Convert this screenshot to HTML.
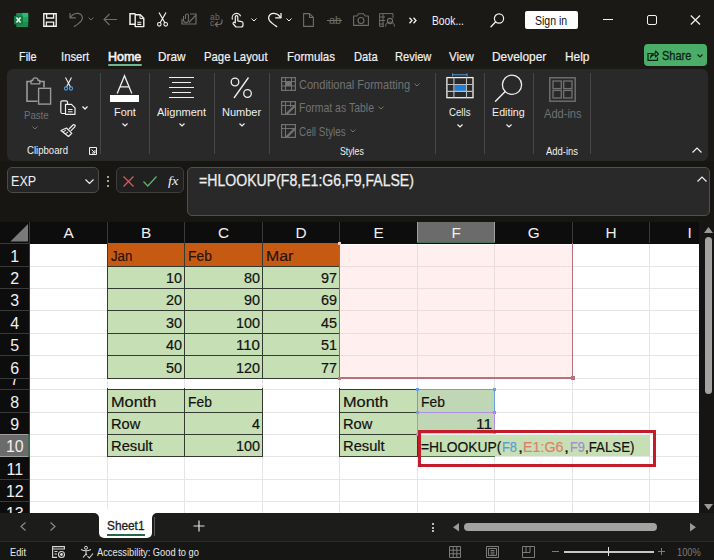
<!DOCTYPE html>
<html><head><meta charset="utf-8">
<style>
*{margin:0;padding:0;box-sizing:border-box}
html,body{width:714px;height:560px;overflow:hidden;background:#1c1a17;font-family:"Liberation Sans",sans-serif;color:#fff;position:relative}
.a{position:absolute}
.t{position:absolute;white-space:nowrap;line-height:1;transform-origin:0 0}
svg{position:absolute;overflow:visible}
</style></head><body>
<div class="a" style="left:0px;top:0px;width:714px;height:222px;background:#1a1916;"></div>
<div class="a" style="left:0px;top:161px;width:714px;height:61px;background:#181613;"></div>
<svg style="left:14px;top:12px;" width="15" height="15" viewBox="0 0 15 15"><rect x="2.2" y="0.9" width="12" height="14" rx="1" fill="#1a8f50"/><rect x="8.3" y="0.9" width="5.9" height="4.6" fill="#2fb876"/><rect x="8.3" y="5.5" width="5.9" height="4.6" fill="#21a05e"/><rect x="0" y="3.7" width="9" height="8.8" rx="1" fill="#127a42"/><path d="M2.4 5.6 L6.6 10.6 M6.6 5.6 L2.4 10.6" stroke="#e8f5ec" stroke-width="1.6"/></svg>
<svg style="left:43px;top:13px;" width="14" height="14" viewBox="0 0 14 14"><path d="M0.8 0.8 H13.2 V13.2 H0.8 Z" fill="none" stroke="#f2f2f2" stroke-width="1.4"/><path d="M3.6 1 V5 H10.6 V1" fill="none" stroke="#f2f2f2" stroke-width="1.3"/><path d="M3.4 13 V9.2 H10.6 V13" fill="none" stroke="#f2f2f2" stroke-width="1.3"/></svg>
<svg style="left:64px;top:8px;" width="24" height="22" viewBox="0 0 24 22"><path d="M6 5 V9.8 H11.8" fill="none" stroke="#6e6e6e" stroke-width="1.2" stroke-linejoin="round"/><path d="M6.5 9.3 C 9.5 4.8, 16.5 3.5, 18.3 9 C 19 11.5, 17.5 13.5, 10.3 18.6" fill="none" stroke="#6e6e6e" stroke-width="1.2" stroke-linecap="round"/></svg>
<svg style="left:88px;top:17px;" width="6" height="4" viewBox="0 0 6 4"><path d="M0.5 0.5 L3 3 L5.5 0.5" fill="none" stroke="#6e6e6e" stroke-width="1"/></svg>
<svg style="left:103px;top:13px;" width="15" height="13" viewBox="0 0 15 13"><path d="M14 6.5 H1 M6.5 1 L1 6.5 L6.5 12" fill="none" stroke="#6e6e6e" stroke-width="1.1"/></svg>
<svg style="left:129px;top:13px;" width="16" height="15" viewBox="0 0 16 15"><path d="M6 11.3 H1 V0.8 H6.5" fill="none" stroke="#f2f2f2" stroke-width="1.5"/><path d="M6.2 1.8 H11.3 L14.8 5.3 V13.6 H6.2 Z" fill="none" stroke="#f2f2f2" stroke-width="1.4" stroke-linejoin="round"/><path d="M11 2 V5.6 H14.6" fill="none" stroke="#f2f2f2" stroke-width="1"/><path d="M8.3 9.2 H12.3 M8.3 11.4 H12.3" stroke="#f2f2f2" stroke-width="1.1"/></svg>
<svg style="left:157px;top:12px;" width="11" height="15" viewBox="0 0 11 15"><path d="M2 0.5 L8 11 M9 0.5 L3 11" stroke="#f2f2f2" stroke-width="1.2" fill="none"/><circle cx="2.3" cy="12.3" r="1.8" fill="none" stroke="#f2f2f2" stroke-width="1.1"/><circle cx="8.7" cy="12.3" r="1.8" fill="none" stroke="#f2f2f2" stroke-width="1.1"/></svg>
<svg style="left:181px;top:13px;" width="16" height="12" viewBox="0 0 16 12"><path d="M9 1 H15 V11 H1 V6" fill="none" stroke="#6e6e6e" stroke-width="1.2"/><path d="M8 9.5 L15 2" stroke="#6e6e6e" stroke-width="1.1"/><path d="M4.5 6 V2.5 A1.5 1.5 0 0 1 7.5 2.5 V7 A2.5 2.5 0 0 1 2.5 7 V3" fill="none" stroke="#6e6e6e" stroke-width="1.1"/></svg>
<div class="t" style="left:210px;top:12.6px;font-size:8.5px;color:#6e6e6e;letter-spacing:0.3px">ab</div>
<div class="t" style="left:210px;top:18.9px;font-size:8.5px;color:#6e6e6e">c</div>
<svg style="left:214px;top:19px;" width="9" height="8" viewBox="0 0 9 8"><path d="M8 0.5 V2.5 A3 3 0 0 1 5 5.5 H1.5 M3.8 3 L1.2 5.5 L3.8 8" fill="none" stroke="#6e6e6e" stroke-width="1.1"/></svg>
<svg style="left:231px;top:12px;" width="14" height="16" viewBox="0 0 14 16"><path d="M1.5 7.5 A4.3 4.3 0 1 1 9.6 4.2" fill="none" stroke="#f2f2f2" stroke-width="1.2"/><path d="M5 15 L2.3 12 A1.1 1.1 0 0 1 4 10.6 L4.3 10.9 V4.9 A1.25 1.25 0 0 1 6.8 4.9 V8.8 L10.6 9.6 A1.7 1.7 0 0 1 12 11.3 V13 A2 2 0 0 1 10 15 Z" fill="#1a1916" stroke="#f2f2f2" stroke-width="1.2" stroke-linejoin="round"/></svg>
<svg style="left:251px;top:18px;" width="6" height="4" viewBox="0 0 6 4"><path d="M0.5 0.5 L3 3 L5.5 0.5" fill="none" stroke="#f2f2f2" stroke-width="1"/></svg>
<svg style="left:262.5px;top:8px;" width="24" height="22" viewBox="0 0 24 22"><g transform="translate(24,0) scale(-1,1)"><path d="M6 5 V9.8 H11.8" fill="none" stroke="#f2f2f2" stroke-width="1.3" stroke-linejoin="round"/><path d="M6.5 9.3 C 9.5 4.8, 16.5 3.5, 18.3 9 C 19 11.5, 17.5 13.5, 10.3 18.6" fill="none" stroke="#f2f2f2" stroke-width="1.3" stroke-linecap="round"/></g></svg>
<svg style="left:286px;top:18px;" width="6" height="4" viewBox="0 0 6 4"><path d="M0.5 0.5 L3 3 L5.5 0.5" fill="none" stroke="#f2f2f2" stroke-width="1"/></svg>
<svg style="left:303px;top:13px;" width="11" height="14" viewBox="0 0 11 14"><path d="M0.6 0.6 H6.5 L10.4 4.5 V13.4 H0.6 Z M6.5 0.6 V4.5 H10.4" fill="none" stroke="#6e6e6e" stroke-width="1.1" stroke-linejoin="round"/></svg>
<div class="t" style="left:329px;top:15px;font-size:11px;color:#6e6e6e">ab</div>
<div class="a" style="left:327px;top:20px;width:15px;height:1px;background:#6e6e6e;"></div>
<svg style="left:353px;top:13px;" width="16" height="13" viewBox="0 0 16 13"><path d="M0.6 3 H4 L5.5 0.8 H10.5 L12 3 H15.4 V12.4 H0.6 Z" fill="none" stroke="#6e6e6e" stroke-width="1.1" stroke-linejoin="round"/><circle cx="8" cy="7.5" r="3" fill="none" stroke="#6e6e6e" stroke-width="1.1"/></svg>
<svg style="left:379px;top:13px;" width="16" height="14" viewBox="0 0 16 14"><path d="M0.6 0.6 H14 V5 M0.6 0.6 V13.4 H5 M0.6 4 H6 M0.6 7.5 H6 M0.6 11 H5 M4 0.6 V13" fill="none" stroke="#6e6e6e" stroke-width="1"/><circle cx="11" cy="8" r="2.6" fill="none" stroke="#6e6e6e" stroke-width="1.1"/><path d="M6.5 13.5 A4.5 4.5 0 0 1 15.5 13.5" fill="none" stroke="#6e6e6e" stroke-width="1.1"/></svg>
<svg style="left:409px;top:17px;" width="8" height="7" viewBox="0 0 8 7"><path d="M0.5 0.8 L3 3.5 L0.5 6.2 M4.5 0.8 L7 3.5 L4.5 6.2" fill="none" stroke="#f2f2f2" stroke-width="1.3"/></svg>
<div class="t" style="left:431.50px;top:15.00px;font-size:12.03px;color:#f2f2f2;transform:scaleX(0.855);">Book...</div>
<svg style="left:490px;top:13px;" width="15" height="15" viewBox="0 0 15 15"><circle cx="9" cy="5.5" r="4.6" fill="none" stroke="#f2f2f2" stroke-width="1.2"/><path d="M5.7 8.8 L1 13.8" stroke="#f2f2f2" stroke-width="1.3" stroke-linecap="round"/></svg>
<div class="a" style="left:525px;top:11px;width:53px;height:18px;background:#ffffff;border-radius:2px"></div>
<div class="t" style="left:535.30px;top:14.00px;font-size:13.04px;color:#111;transform:scaleX(0.807);">Sign in</div>
<div class="a" style="left:603px;top:19px;width:10px;height:1.2px;background:#f2f2f2;"></div>
<div class="a" style="left:646.5px;top:15px;width:10.5px;height:10px;border:1.3px solid #f2f2f2;border-radius:2px"></div>
<svg style="left:690px;top:15px;" width="11" height="10" viewBox="0 0 11 10"><path d="M0.8 0.5 L10 9.5 M10 0.5 L0.8 9.5" stroke="#f2f2f2" stroke-width="1.2"/></svg>
<div class="t" style="left:18.90px;top:50.00px;font-size:13.48px;color:#f2f2f2;transform:scaleX(0.810);-webkit-text-stroke:0.2px currentColor;">File</div>
<div class="t" style="left:61.20px;top:50.00px;font-size:13.48px;color:#f2f2f2;transform:scaleX(0.837);-webkit-text-stroke:0.2px currentColor;">Insert</div>
<div class="t" style="left:158.40px;top:50.00px;font-size:13.48px;color:#f2f2f2;transform:scaleX(0.874);-webkit-text-stroke:0.2px currentColor;">Draw</div>
<div class="t" style="left:204.00px;top:50.00px;font-size:13.48px;color:#f2f2f2;transform:scaleX(0.840);-webkit-text-stroke:0.2px currentColor;">Page Layout</div>
<div class="t" style="left:287.30px;top:50.00px;font-size:13.48px;color:#f2f2f2;transform:scaleX(0.856);-webkit-text-stroke:0.2px currentColor;">Formulas</div>
<div class="t" style="left:353.50px;top:50.00px;font-size:13.48px;color:#f2f2f2;transform:scaleX(0.829);-webkit-text-stroke:0.2px currentColor;">Data</div>
<div class="t" style="left:394.60px;top:50.00px;font-size:13.48px;color:#f2f2f2;transform:scaleX(0.824);-webkit-text-stroke:0.2px currentColor;">Review</div>
<div class="t" style="left:449.20px;top:50.00px;font-size:13.48px;color:#f2f2f2;transform:scaleX(0.856);-webkit-text-stroke:0.2px currentColor;">View</div>
<div class="t" style="left:492.20px;top:50.00px;font-size:13.48px;color:#f2f2f2;transform:scaleX(0.884);-webkit-text-stroke:0.2px currentColor;">Developer</div>
<div class="t" style="left:565.00px;top:50.00px;font-size:13.48px;color:#f2f2f2;transform:scaleX(0.884);-webkit-text-stroke:0.2px currentColor;">Help</div>
<div class="t" style="left:108.30px;top:50.00px;font-size:13.48px;color:#f2f2f2;transform:scaleX(0.926);-webkit-text-stroke:0.65px currentColor;">Home</div>
<div class="a" style="left:108px;top:64px;width:34px;height:2px;background:#6fba8c;border-radius:1px"></div>
<div class="a" style="left:643.5px;top:44px;width:63px;height:22px;background:#4aad69;border-radius:4px"></div>
<svg style="left:647px;top:50px;" width="12" height="11" viewBox="0 0 12 11"><path d="M5.5 3.5 H1 V10.3 H10.5 V7.5" fill="none" stroke="#0b2613" stroke-width="1.2"/><path d="M3.5 8 A5 5 0 0 1 8.5 3 V1 L11.5 4 L8.5 7 V5 A4 4 0 0 0 3.5 8 Z" fill="none" stroke="#0b2613" stroke-width="1.1" stroke-linejoin="round"/></svg>
<div class="t" style="left:662.40px;top:50.00px;font-size:12.75px;color:#0b2613;transform:scaleX(0.864);-webkit-text-stroke:0.3px currentColor;">Share</div>
<svg style="left:697px;top:54px;" width="6" height="4" viewBox="0 0 6 4"><path d="M0.5 0.5 L3 3 L5.5 0.5" fill="none" stroke="#0b2613" stroke-width="1.2"/></svg>
<div class="a" style="left:7px;top:69px;width:701px;height:92px;background:#292929;border-radius:6px"></div>
<div class="a" style="left:100px;top:73px;width:1px;height:81px;background:#464646;"></div>
<div class="a" style="left:149px;top:73px;width:1px;height:81px;background:#464646;"></div>
<div class="a" style="left:214px;top:73px;width:1px;height:81px;background:#464646;"></div>
<div class="a" style="left:269px;top:73px;width:1px;height:81px;background:#464646;"></div>
<div class="a" style="left:435px;top:73px;width:1px;height:81px;background:#464646;"></div>
<div class="a" style="left:484px;top:73px;width:1px;height:81px;background:#464646;"></div>
<div class="a" style="left:533px;top:73px;width:1px;height:81px;background:#464646;"></div>
<div class="a" style="left:590px;top:73px;width:1px;height:81px;background:#464646;"></div>
<svg style="left:26px;top:77px;" width="26" height="28" viewBox="0 0 26 28"><path d="M5.5 4.5 H1 V24.2 H11.5" fill="none" stroke="#9a9a9a" stroke-width="1.6"/><path d="M13 4.5 H18 V10.5" fill="none" stroke="#9a9a9a" stroke-width="1.6"/><path d="M5 6.8 H13.8 V3.5 H12 A2.6 2.6 0 0 0 6.8 3.5 H5 Z" fill="none" stroke="#9a9a9a" stroke-width="1.3" stroke-linejoin="round"/><rect x="12.6" y="11.3" width="12" height="15.8" fill="none" stroke="#9a9a9a" stroke-width="1.4"/></svg>
<div class="t" style="left:23.70px;top:111.00px;font-size:10.00px;color:#727272;transform:scaleX(0.962);">Paste</div>
<svg style="left:32px;top:126px;" width="6" height="4" viewBox="0 0 6 4"><path d="M0.5 0.5 L3 3 L5.5 0.5" fill="none" stroke="#727272" stroke-width="1"/></svg>
<svg style="left:64px;top:77px;" width="9" height="14" viewBox="0 0 9 14"><path d="M1.5 0.5 L6.5 10 M7.5 0.5 L2.5 10" stroke="#f0f0f0" stroke-width="1.1" fill="none"/><circle cx="2" cy="11.5" r="1.6" fill="none" stroke="#4aa0e6" stroke-width="1.1"/><circle cx="7" cy="11.5" r="1.6" fill="none" stroke="#4aa0e6" stroke-width="1.1"/></svg>
<svg style="left:60px;top:100px;" width="16" height="15" viewBox="0 0 16 15"><path d="M5.5 13.5 H2.3 A1.5 1.5 0 0 1 0.8 12 V2.3 A1.5 1.5 0 0 1 2.3 0.8 H6 A1.5 1.5 0 0 1 7.5 2.3 V4" fill="none" stroke="#f0f0f0" stroke-width="1.2"/><path d="M5.5 4.3 H11.5 L15 7.8 V14.3 H5.5 Z" fill="none" stroke="#f0f0f0" stroke-width="1.2" stroke-linejoin="round"/><path d="M8 9.5 H12.5 M8 11.8 H12.5" stroke="#f0f0f0" stroke-width="1"/></svg>
<svg style="left:81.5px;top:105.5px;" width="6" height="4" viewBox="0 0 6 4"><path d="M0.5 0.5 L3 3 L5.5 0.5" fill="none" stroke="#f0f0f0" stroke-width="1.3"/></svg>
<svg style="left:60px;top:123px;" width="16" height="14" viewBox="0 0 16 14"><path d="M9 6 L13 2 A1.2 1.2 0 0 1 14.8 3.8 L10.8 7.8" fill="none" stroke="#f0f0f0" stroke-width="1.2"/><path d="M6.5 5 L11.8 10.3 L8.5 13.5 L1 7.5 Z" fill="none" stroke="#f0f0f0" stroke-width="1.2" stroke-linejoin="round"/><path d="M3 9 L6 7 M5 11 L8 9" stroke="#f0f0f0" stroke-width="1"/></svg>
<div class="t" style="left:26.90px;top:146.00px;font-size:10.29px;color:#f0f0f0;transform:scaleX(0.931);">Clipboard</div>
<svg style="left:89px;top:147px;" width="8" height="8" viewBox="0 0 8 8"><path d="M0.5 0.5 H7.5 V7.5 H0.5 Z" fill="none" stroke="#f0f0f0" stroke-width="1"/><path d="M2.5 2.5 L6 6 M3 6 H6 V3" fill="none" stroke="#f0f0f0" stroke-width="1"/></svg>
<svg style="left:116px;top:75px;" width="17" height="19" viewBox="0 0 17 19"><path d="M1.2 18.5 L8.5 0.8 L15.8 18.5 M4.3 11.8 H12.7" fill="none" stroke="#f0f0f0" stroke-width="1.3"/></svg>
<div class="a" style="left:110px;top:94.7px;width:29px;height:7.5px;background:#ffffff;"></div>
<div class="t" style="left:113.90px;top:107.00px;font-size:11.59px;color:#f0f0f0;transform:scaleX(0.944);">Font</div>
<svg style="left:121.5px;top:123px;" width="6" height="4" viewBox="0 0 6 4"><path d="M0.5 0.5 L3 3 L5.5 0.5" fill="none" stroke="#f0f0f0" stroke-width="1.2"/></svg>
<div class="a" style="left:168.5px;top:77px;width:25.5px;height:1.3px;background:#f0f0f0;"></div>
<div class="a" style="left:172px;top:82px;width:18.5px;height:1.3px;background:#f0f0f0;"></div>
<div class="a" style="left:168.5px;top:87px;width:25.5px;height:1.3px;background:#f0f0f0;"></div>
<div class="a" style="left:172px;top:92px;width:18.5px;height:1.3px;background:#f0f0f0;"></div>
<div class="a" style="left:168.5px;top:97px;width:25.5px;height:1.3px;background:#f0f0f0;"></div>
<div class="t" style="left:156.70px;top:107.00px;font-size:11.59px;color:#f0f0f0;transform:scaleX(0.952);">Alignment</div>
<svg style="left:178.5px;top:123px;" width="6" height="4" viewBox="0 0 6 4"><path d="M0.5 0.5 L3 3 L5.5 0.5" fill="none" stroke="#f0f0f0" stroke-width="1.2"/></svg>
<svg style="left:230px;top:77px;" width="23" height="22" viewBox="0 0 23 22"><circle cx="5" cy="5" r="3.8" fill="none" stroke="#f0f0f0" stroke-width="1.3"/><circle cx="17.5" cy="16.5" r="3.8" fill="none" stroke="#f0f0f0" stroke-width="1.3"/><path d="M18.5 0.5 L4 21" stroke="#f0f0f0" stroke-width="1.3"/></svg>
<div class="t" style="left:222.00px;top:107.00px;font-size:11.59px;color:#f0f0f0;transform:scaleX(0.951);">Number</div>
<svg style="left:238.5px;top:123px;" width="6" height="4" viewBox="0 0 6 4"><path d="M0.5 0.5 L3 3 L5.5 0.5" fill="none" stroke="#f0f0f0" stroke-width="1.2"/></svg>
<svg style="left:281px;top:77px;" width="15" height="14" viewBox="0 0 15 14"><rect x="0.6" y="0.6" width="13.8" height="12.8" fill="none" stroke="#727272" stroke-width="1.2"/><path d="M0.6 4.5 H14.4 M0.6 9 H14.4 M4.5 0.6 V13.4 M10.5 0.6 V13.4" stroke="#727272" stroke-width="1"/><rect x="4.5" y="4.5" width="6" height="4.5" fill="#727272"/></svg>
<svg style="left:281px;top:100.5px;" width="15" height="14" viewBox="0 0 15 14"><rect x="0.6" y="0.6" width="13.8" height="12.8" fill="none" stroke="#727272" stroke-width="1.2"/><path d="M0.6 4.5 H14.4 M4.5 0.6 V13.4 M9.5 0.6 V6" stroke="#727272" stroke-width="1"/><path d="M4 13 L13.5 3.5 L14.2 6 L7 13.2 Z" fill="#727272"/></svg>
<svg style="left:281px;top:124px;" width="15" height="14" viewBox="0 0 15 14"><rect x="0.6" y="0.6" width="13.8" height="12.8" fill="none" stroke="#727272" stroke-width="1.2"/><path d="M0.6 4.5 H14.4 M4.5 0.6 V13.4" stroke="#727272" stroke-width="1"/><path d="M4 13 L13.5 3.5 L14.2 6 L7 13.2 Z" fill="#727272"/></svg>
<div class="t" style="left:299.00px;top:78.00px;font-size:13.19px;color:#727272;transform:scaleX(0.837);">Conditional Formatting</div>
<svg style="left:413.5px;top:82.5px;" width="6" height="4" viewBox="0 0 6 4"><path d="M0.5 0.5 L3 3 L5.5 0.5" fill="none" stroke="#727272" stroke-width="1"/></svg>
<div class="t" style="left:299.00px;top:101.00px;font-size:13.19px;color:#727272;transform:scaleX(0.795);">Format as Table</div>
<svg style="left:377.5px;top:105.5px;" width="6" height="4" viewBox="0 0 6 4"><path d="M0.5 0.5 L3 3 L5.5 0.5" fill="none" stroke="#727272" stroke-width="1"/></svg>
<div class="t" style="left:299.00px;top:125.00px;font-size:13.19px;color:#727272;transform:scaleX(0.750);">Cell Styles</div>
<svg style="left:349.5px;top:129px;" width="6" height="4" viewBox="0 0 6 4"><path d="M0.5 0.5 L3 3 L5.5 0.5" fill="none" stroke="#727272" stroke-width="1"/></svg>
<div class="t" style="left:340.20px;top:147.00px;font-size:10.29px;color:#f0f0f0;transform:scaleX(0.849);">Styles</div>
<svg style="left:446px;top:73px;" width="28" height="26" viewBox="0 0 28 26"><path d="M6.6 1.8 H21 M6.6 0.3 V3.3 M21 0.3 V3.3" stroke="#5a9bd5" stroke-width="1"/><rect x="8.4" y="12" width="11.6" height="6" fill="#1e7fd8"/><rect x="0.9" y="4.6" width="26.1" height="20.1" fill="none" stroke="#f0f0f0" stroke-width="1.3"/><path d="M0.9 11.5 H27 M0.9 18.4 H27 M7.9 4.6 V24.7 M20.5 4.6 V24.7" stroke="#bdbdbd" stroke-width="1.1"/></svg>
<div class="t" style="left:449.00px;top:107.00px;font-size:11.59px;color:#f0f0f0;transform:scaleX(0.834);">Cells</div>
<svg style="left:456.5px;top:123.5px;" width="6" height="4" viewBox="0 0 6 4"><path d="M0.5 0.5 L3 3 L5.5 0.5" fill="none" stroke="#f0f0f0" stroke-width="1.2"/></svg>
<svg style="left:494px;top:74px;" width="30" height="28" viewBox="0 0 30 28"><circle cx="18" cy="10.8" r="9.6" fill="none" stroke="#f0f0f0" stroke-width="1.3"/><path d="M11.2 17.6 L1.5 27.3" stroke="#f0f0f0" stroke-width="1.4" stroke-linecap="round"/></svg>
<div class="t" style="left:492.40px;top:107.00px;font-size:11.59px;color:#f0f0f0;transform:scaleX(0.925);">Editing</div>
<svg style="left:505.6px;top:123.5px;" width="6" height="4" viewBox="0 0 6 4"><path d="M0.5 0.5 L3 3 L5.5 0.5" fill="none" stroke="#f0f0f0" stroke-width="1.2"/></svg>
<svg style="left:549px;top:77px;" width="27" height="25" viewBox="0 0 27 25"><rect x="0.8" y="0.8" width="25.4" height="23.4" fill="none" stroke="#727272" stroke-width="1.4"/><rect x="4" y="4" width="8.3" height="7.6" fill="none" stroke="#727272" stroke-width="1.3"/><rect x="14.7" y="4" width="8.3" height="7.6" fill="none" stroke="#727272" stroke-width="1.3"/><rect x="4" y="13.4" width="8.3" height="7.6" fill="none" stroke="#727272" stroke-width="1.3"/><rect x="14.7" y="13.4" width="8.3" height="7.6" fill="none" stroke="#727272" stroke-width="1.3"/></svg>
<div class="t" style="left:543.60px;top:108.00px;font-size:12.03px;color:#727272;transform:scaleX(0.922);">Add-ins</div>
<div class="t" style="left:546.00px;top:147.00px;font-size:10.29px;color:#f0f0f0;transform:scaleX(0.917);">Add-ins</div>
<svg style="left:692px;top:147px;" width="10" height="6" viewBox="0 0 10 6"><path d="M0.5 5.5 L5 1 L9.5 5.5" fill="none" stroke="#f0f0f0" stroke-width="1.2"/></svg>
<div class="a" style="left:6.5px;top:167px;width:92px;height:26px;background:#252525;border:1px solid #4b4b4b;border-radius:5px"></div>
<div class="t" style="left:11.20px;top:173.00px;font-size:15.07px;color:#f0f0f0;transform:scaleX(0.836);">EXP</div>
<svg style="left:85px;top:179px;" width="9" height="5" viewBox="0 0 9 5"><path d="M0.5 0.5 L4.5 4.5 L8.5 0.5" fill="none" stroke="#f0f0f0" stroke-width="1.2"/></svg>
<div class="a" style="left:106.8px;top:175.5px;width:2px;height:2px;background:#d0d0d0;border-radius:1px"></div>
<div class="a" style="left:106.8px;top:180px;width:2px;height:2px;background:#d0d0d0;border-radius:1px"></div>
<div class="a" style="left:106.8px;top:184.5px;width:2px;height:2px;background:#d0d0d0;border-radius:1px"></div>
<div class="a" style="left:116px;top:167px;width:68px;height:26px;background:#202020;border:1px solid #3d3d3d;border-radius:5px"></div>
<svg style="left:123px;top:175.5px;" width="11" height="11" viewBox="0 0 11 11"><path d="M0.5 0.5 L10.5 10.5 M10.5 0.5 L0.5 10.5" stroke="#d65a5a" stroke-width="1.3"/></svg>
<svg style="left:143px;top:175.5px;" width="14" height="11" viewBox="0 0 14 11"><path d="M0.5 5.5 L4.8 10 L13.5 0.5" fill="none" stroke="#5fb16a" stroke-width="1.3"/></svg>
<div class="t" style="left:167.50px;top:175.00px;font-size:12.75px;color:#f0f0f0;font-family:'Liberation Serif',serif;font-style:italic;transform:scaleX(1.130);">fx</div>
<div class="a" style="left:187px;top:167px;width:523px;height:49px;background:#292929;border:1px solid #505050;border-radius:5px"></div>
<div class="t" style="left:198.50px;top:173.00px;font-size:15.80px;color:#f0f0f0;transform:scaleX(0.892);-webkit-text-stroke:0.25px currentColor;">=HLOOKUP(F8,E1:G6,F9,FALSE)</div>
<svg style="left:697px;top:176px;" width="10" height="6" viewBox="0 0 10 6"><path d="M0.5 5.5 L5 1 L9.5 5.5" fill="none" stroke="#f0f0f0" stroke-width="1.2"/></svg>
<div class="a" style="left:0px;top:222px;width:699px;height:291px;background:#0d0d0d;"></div>
<div class="a" style="left:30px;top:244px;width:669px;height:269px;background:#ffffff;"></div>
<div class="a" style="left:340px;top:245px;width:232px;height:133px;background:#ffefef;"></div>
<div class="a" style="left:107px;top:244px;width:1px;height:269px;background:#e5e5e5;"></div>
<div class="a" style="left:184px;top:244px;width:1px;height:269px;background:#e5e5e5;"></div>
<div class="a" style="left:262px;top:244px;width:1px;height:269px;background:#e5e5e5;"></div>
<div class="a" style="left:339px;top:244px;width:1px;height:269px;background:#e5e5e5;"></div>
<div class="a" style="left:417px;top:244px;width:1px;height:269px;background:#e5e5e5;"></div>
<div class="a" style="left:494px;top:244px;width:1px;height:269px;background:#e5e5e5;"></div>
<div class="a" style="left:572px;top:244px;width:1px;height:269px;background:#e5e5e5;"></div>
<div class="a" style="left:649px;top:244px;width:1px;height:269px;background:#e5e5e5;"></div>
<div class="a" style="left:30px;top:266px;width:669px;height:1px;background:#e5e5e5;"></div>
<div class="a" style="left:30px;top:288px;width:669px;height:1px;background:#e5e5e5;"></div>
<div class="a" style="left:30px;top:310px;width:669px;height:1px;background:#e5e5e5;"></div>
<div class="a" style="left:30px;top:333px;width:669px;height:1px;background:#e5e5e5;"></div>
<div class="a" style="left:30px;top:355px;width:669px;height:1px;background:#e5e5e5;"></div>
<div class="a" style="left:30px;top:378px;width:669px;height:1px;background:#e5e5e5;"></div>
<div class="a" style="left:30px;top:389px;width:669px;height:1px;background:#e5e5e5;"></div>
<div class="a" style="left:30px;top:412px;width:669px;height:1px;background:#e5e5e5;"></div>
<div class="a" style="left:30px;top:434px;width:669px;height:1px;background:#e5e5e5;"></div>
<div class="a" style="left:30px;top:456px;width:669px;height:1px;background:#e5e5e5;"></div>
<div class="a" style="left:30px;top:479px;width:669px;height:1px;background:#e5e5e5;"></div>
<div class="a" style="left:30px;top:501px;width:669px;height:1px;background:#e5e5e5;"></div>
<div class="a" style="left:417px;top:245px;width:1px;height:133px;background:#eedcdc;"></div>
<div class="a" style="left:494px;top:245px;width:1px;height:133px;background:#eedcdc;"></div>
<div class="a" style="left:340px;top:266px;width:232px;height:1px;background:#eedcdc;"></div>
<div class="a" style="left:340px;top:288px;width:232px;height:1px;background:#eedcdc;"></div>
<div class="a" style="left:340px;top:310px;width:232px;height:1px;background:#eedcdc;"></div>
<div class="a" style="left:340px;top:333px;width:232px;height:1px;background:#eedcdc;"></div>
<div class="a" style="left:340px;top:355px;width:232px;height:1px;background:#eedcdc;"></div>
<div class="a" style="left:107px;top:222px;width:1px;height:21px;background:#3a3a3a;"></div>
<div class="a" style="left:184px;top:222px;width:1px;height:21px;background:#3a3a3a;"></div>
<div class="a" style="left:262px;top:222px;width:1px;height:21px;background:#3a3a3a;"></div>
<div class="a" style="left:339px;top:222px;width:1px;height:21px;background:#3a3a3a;"></div>
<div class="a" style="left:417px;top:222px;width:1px;height:21px;background:#3a3a3a;"></div>
<div class="a" style="left:494px;top:222px;width:1px;height:21px;background:#3a3a3a;"></div>
<div class="a" style="left:572px;top:222px;width:1px;height:21px;background:#3a3a3a;"></div>
<div class="a" style="left:649px;top:222px;width:1px;height:21px;background:#3a3a3a;"></div>
<div class="a" style="left:29px;top:222px;width:1px;height:291px;background:#3a3a3a;"></div>
<div class="a" style="left:0px;top:243px;width:29px;height:1px;background:#3a3a3a;"></div>
<div class="a" style="left:0px;top:266px;width:29px;height:1px;background:#3a3a3a;"></div>
<div class="a" style="left:0px;top:288px;width:29px;height:1px;background:#3a3a3a;"></div>
<div class="a" style="left:0px;top:310px;width:29px;height:1px;background:#3a3a3a;"></div>
<div class="a" style="left:0px;top:333px;width:29px;height:1px;background:#3a3a3a;"></div>
<div class="a" style="left:0px;top:355px;width:29px;height:1px;background:#3a3a3a;"></div>
<div class="a" style="left:0px;top:378px;width:29px;height:1px;background:#3a3a3a;"></div>
<div class="a" style="left:0px;top:389px;width:29px;height:1px;background:#3a3a3a;"></div>
<div class="a" style="left:0px;top:412px;width:29px;height:1px;background:#3a3a3a;"></div>
<div class="a" style="left:0px;top:434px;width:29px;height:1px;background:#3a3a3a;"></div>
<div class="a" style="left:0px;top:456px;width:29px;height:1px;background:#3a3a3a;"></div>
<div class="a" style="left:0px;top:479px;width:29px;height:1px;background:#3a3a3a;"></div>
<div class="a" style="left:0px;top:501px;width:29px;height:1px;background:#3a3a3a;"></div>
<div class="a" style="left:417px;top:222px;width:78px;height:21px;background:#6b6b6b;border:1px solid #a0a0a0;border-bottom:none;border-top:none"></div>
<div class="a" style="left:417px;top:242px;width:78px;height:1px;background:#4a6e5a;"></div>
<div class="a" style="left:0px;top:434px;width:29px;height:23px;background:#6b6b6b;border-top:1px solid #a0a0a0;border-bottom:1px solid #a0a0a0"></div>
<div class="a" style="left:28px;top:434px;width:2px;height:23px;background:#3d6a50;"></div>
<svg style="left:10px;top:224px;" width="19" height="18" viewBox="0 0 19 18"><path d="M18 0 V17.6 H0.4 Z" fill="#7a7a7a"/></svg>
<div class="t" style="left:63.50px;top:225.00px;font-size:15.36px;color:#f0f0f0;">A</div>
<div class="t" style="left:141.00px;top:225.00px;font-size:15.36px;color:#f0f0f0;">B</div>
<div class="t" style="left:218.08px;top:225.00px;font-size:15.36px;color:#f0f0f0;">C</div>
<div class="t" style="left:295.58px;top:225.00px;font-size:15.36px;color:#f0f0f0;">D</div>
<div class="t" style="left:373.50px;top:225.00px;font-size:15.36px;color:#f0f0f0;">E</div>
<div class="t" style="left:451.42px;top:225.00px;font-size:15.36px;color:#f0f0f0;">F</div>
<div class="t" style="left:527.67px;top:225.00px;font-size:15.36px;color:#f0f0f0;">G</div>
<div class="t" style="left:605.58px;top:225.00px;font-size:15.36px;color:#f0f0f0;">H</div>
<div class="t" style="left:687.42px;top:225.00px;font-size:15.36px;color:#f0f0f0;">I</div>
<div class="t" style="left:10.33px;top:249.00px;font-size:15.94px;color:#f0f0f0;">1</div>
<div class="t" style="left:10.33px;top:271.00px;font-size:15.94px;color:#f0f0f0;">2</div>
<div class="t" style="left:10.33px;top:293.00px;font-size:15.94px;color:#f0f0f0;">3</div>
<div class="t" style="left:10.33px;top:316.00px;font-size:15.94px;color:#f0f0f0;">4</div>
<div class="t" style="left:10.33px;top:338.00px;font-size:15.94px;color:#f0f0f0;">5</div>
<div class="t" style="left:10.33px;top:361.00px;font-size:15.94px;color:#f0f0f0;">6</div>
<div class="a" style="left:0;top:379px;width:29px;height:10px;overflow:hidden">
<div class="t" style="left:10.33px;top:-7.00px;font-size:15.94px;color:#f0f0f0;">7</div>
</div>
<div class="t" style="left:10.33px;top:395.00px;font-size:15.94px;color:#f0f0f0;">8</div>
<div class="t" style="left:10.33px;top:417.00px;font-size:15.94px;color:#f0f0f0;">9</div>
<div class="t" style="left:5.91px;top:439.00px;font-size:15.94px;color:#f0f0f0;">10</div>
<div class="t" style="left:6.50px;top:462.00px;font-size:15.94px;color:#f0f0f0;">11</div>
<div class="t" style="left:5.91px;top:484.00px;font-size:15.94px;color:#f0f0f0;">12</div>
<div class="a" style="left:0;top:502px;width:29px;height:11px;overflow:hidden">
<div class="t" style="left:5.91px;top:4.00px;font-size:15.94px;color:#f0f0f0;">13</div>
</div>
<div class="a" style="left:108px;top:243px;width:231px;height:23px;background:#c65a12;"></div>
<div class="a" style="left:108px;top:266px;width:231px;height:112px;background:#c6dfb4;"></div>
<div class="a" style="left:107px;top:243px;width:1px;height:136px;background:#333b30;"></div>
<div class="a" style="left:184px;top:243px;width:1px;height:136px;background:#333b30;"></div>
<div class="a" style="left:262px;top:243px;width:1px;height:136px;background:#333b30;"></div>
<div class="a" style="left:339px;top:243px;width:1px;height:136px;background:#333b30;"></div>
<div class="a" style="left:107px;top:266px;width:233px;height:1px;background:#333b30;"></div>
<div class="a" style="left:107px;top:288px;width:233px;height:1px;background:#333b30;"></div>
<div class="a" style="left:107px;top:310px;width:233px;height:1px;background:#333b30;"></div>
<div class="a" style="left:107px;top:333px;width:233px;height:1px;background:#333b30;"></div>
<div class="a" style="left:107px;top:355px;width:233px;height:1px;background:#333b30;"></div>
<div class="a" style="left:107px;top:378px;width:233px;height:1px;background:#333b30;"></div>
<div class="a" style="left:108px;top:389px;width:154px;height:67px;background:#c6dfb4;"></div>
<div class="a" style="left:107px;top:388px;width:1px;height:69px;background:#333b30;"></div>
<div class="a" style="left:184px;top:388px;width:1px;height:69px;background:#333b30;"></div>
<div class="a" style="left:262px;top:388px;width:1px;height:69px;background:#333b30;"></div>
<div class="a" style="left:107px;top:389px;width:156px;height:1px;background:#333b30;"></div>
<div class="a" style="left:107px;top:412px;width:156px;height:1px;background:#333b30;"></div>
<div class="a" style="left:107px;top:434px;width:156px;height:1px;background:#333b30;"></div>
<div class="a" style="left:107px;top:456px;width:156px;height:1px;background:#333b30;"></div>
<div class="a" style="left:107px;top:389px;width:156px;height:1px;background:#333b30;"></div>
<div class="a" style="left:340px;top:389px;width:154px;height:67px;background:#c6dfb4;"></div>
<div class="a" style="left:339px;top:388px;width:1px;height:69px;background:#333b30;"></div>
<div class="a" style="left:417px;top:388px;width:1px;height:69px;background:#333b30;"></div>
<div class="a" style="left:339px;top:389px;width:79px;height:1px;background:#333b30;"></div>
<div class="a" style="left:339px;top:412px;width:79px;height:1px;background:#333b30;"></div>
<div class="a" style="left:339px;top:434px;width:79px;height:1px;background:#333b30;"></div>
<div class="a" style="left:339px;top:456px;width:79px;height:1px;background:#333b30;"></div>
<div class="a" style="left:339px;top:389px;width:79px;height:1px;background:#333b30;"></div>
<div class="t" style="left:110.50px;top:248.00px;font-size:15.22px;color:#2a1206;transform:scaleX(0.868);-webkit-text-stroke:0.2px currentColor;">Jan</div>
<div class="t" style="left:187.50px;top:248.00px;font-size:15.22px;color:#2a1206;transform:scaleX(0.908);-webkit-text-stroke:0.2px currentColor;">Feb</div>
<div class="t" style="left:265.50px;top:248.00px;font-size:15.22px;color:#2a1206;transform:scaleX(1.042);-webkit-text-stroke:0.2px currentColor;">Mar</div>
<div class="t" style="left:165.60px;top:270.00px;font-size:15.22px;color:#111;transform:scaleX(0.945);-webkit-text-stroke:0.2px currentColor;">10</div>
<div class="t" style="left:243.60px;top:270.00px;font-size:15.22px;color:#111;transform:scaleX(0.945);-webkit-text-stroke:0.2px currentColor;">80</div>
<div class="t" style="left:320.60px;top:270.00px;font-size:15.22px;color:#111;transform:scaleX(0.945);-webkit-text-stroke:0.2px currentColor;">97</div>
<div class="t" style="left:165.60px;top:292.00px;font-size:15.22px;color:#111;transform:scaleX(0.945);-webkit-text-stroke:0.2px currentColor;">20</div>
<div class="t" style="left:243.60px;top:292.00px;font-size:15.22px;color:#111;transform:scaleX(0.945);-webkit-text-stroke:0.2px currentColor;">90</div>
<div class="t" style="left:320.60px;top:292.00px;font-size:15.22px;color:#111;transform:scaleX(0.945);-webkit-text-stroke:0.2px currentColor;">69</div>
<div class="t" style="left:165.60px;top:315.00px;font-size:15.22px;color:#111;transform:scaleX(0.945);-webkit-text-stroke:0.2px currentColor;">30</div>
<div class="t" style="left:235.60px;top:315.00px;font-size:15.22px;color:#111;transform:scaleX(0.945);-webkit-text-stroke:0.2px currentColor;">100</div>
<div class="t" style="left:320.60px;top:315.00px;font-size:15.22px;color:#111;transform:scaleX(0.945);-webkit-text-stroke:0.2px currentColor;">45</div>
<div class="t" style="left:165.60px;top:337.00px;font-size:15.22px;color:#111;transform:scaleX(0.945);-webkit-text-stroke:0.2px currentColor;">40</div>
<div class="t" style="left:235.60px;top:337.00px;font-size:15.22px;color:#111;transform:scaleX(0.989);-webkit-text-stroke:0.2px currentColor;">110</div>
<div class="t" style="left:320.60px;top:337.00px;font-size:15.22px;color:#111;transform:scaleX(0.945);-webkit-text-stroke:0.2px currentColor;">51</div>
<div class="t" style="left:165.60px;top:360.00px;font-size:15.22px;color:#111;transform:scaleX(0.945);-webkit-text-stroke:0.2px currentColor;">50</div>
<div class="t" style="left:235.60px;top:360.00px;font-size:15.22px;color:#111;transform:scaleX(0.945);-webkit-text-stroke:0.2px currentColor;">120</div>
<div class="t" style="left:320.60px;top:360.00px;font-size:15.22px;color:#111;transform:scaleX(0.945);-webkit-text-stroke:0.2px currentColor;">77</div>
<div class="t" style="left:110.50px;top:394.00px;font-size:15.22px;color:#111;transform:scaleX(1.073);-webkit-text-stroke:0.2px currentColor;">Month</div>
<div class="t" style="left:187.50px;top:394.00px;font-size:15.22px;color:#111;transform:scaleX(0.908);-webkit-text-stroke:0.2px currentColor;">Feb</div>
<div class="t" style="left:110.50px;top:416.00px;font-size:15.22px;color:#111;transform:scaleX(0.962);-webkit-text-stroke:0.2px currentColor;">Row</div>
<div class="t" style="left:251.60px;top:416.00px;font-size:15.22px;color:#111;transform:scaleX(0.945);-webkit-text-stroke:0.2px currentColor;">4</div>
<div class="t" style="left:110.50px;top:438.00px;font-size:15.22px;color:#111;transform:scaleX(0.967);-webkit-text-stroke:0.2px currentColor;">Result</div>
<div class="t" style="left:235.60px;top:438.00px;font-size:15.22px;color:#111;transform:scaleX(0.945);-webkit-text-stroke:0.2px currentColor;">100</div>
<div class="t" style="left:342.50px;top:394.00px;font-size:15.22px;color:#111;transform:scaleX(1.073);-webkit-text-stroke:0.2px currentColor;">Month</div>
<div class="t" style="left:420.50px;top:394.00px;font-size:15.22px;color:#111;transform:scaleX(0.908);-webkit-text-stroke:0.2px currentColor;">Feb</div>
<div class="t" style="left:342.50px;top:416.00px;font-size:15.22px;color:#111;transform:scaleX(0.962);-webkit-text-stroke:0.2px currentColor;">Row</div>
<div class="t" style="left:475.60px;top:416.00px;font-size:15.22px;color:#111;transform:scaleX(1.013);-webkit-text-stroke:0.2px currentColor;">11</div>
<div class="t" style="left:342.50px;top:438.00px;font-size:15.22px;color:#111;transform:scaleX(0.967);-webkit-text-stroke:0.2px currentColor;">Result</div>
<div class="a" style="left:572px;top:243px;width:1px;height:135px;background:#b8707a;"></div>
<div class="a" style="left:340px;top:377px;width:233px;height:1.5px;background:#b8707a;"></div>
<div class="a" style="left:570.5px;top:375.5px;width:4px;height:4px;background:#b8707a;"></div>
<div class="a" style="left:339px;top:243px;width:1px;height:135px;background:#9c6c64;"></div>
<div class="a" style="left:338px;top:242px;width:3px;height:3px;background:#f3c6c6;"></div>
<div class="a" style="left:337.5px;top:376.5px;width:3px;height:3px;background:#c07a80;"></div>
<div class="a" style="left:418px;top:390px;width:76px;height:44px;background:#bfd7b5;"></div>
<div class="t" style="left:420.50px;top:394.00px;font-size:15.22px;color:#111;transform:scaleX(0.908);-webkit-text-stroke:0.2px currentColor;">Feb</div>
<div class="t" style="left:475.60px;top:416.00px;font-size:15.22px;color:#111;transform:scaleX(1.013);-webkit-text-stroke:0.2px currentColor;">11</div>
<div class="a" style="left:417px;top:389px;width:78px;height:24px;border:1px solid #6aa0e0"></div>
<div class="a" style="left:416px;top:388px;width:3px;height:3px;background:#6aa0e0;"></div>
<div class="a" style="left:493px;top:388px;width:3px;height:3px;background:#6aa0e0;"></div>
<div class="a" style="left:416px;top:411px;width:3px;height:3px;background:#6aa0e0;"></div>
<div class="a" style="left:493px;top:411px;width:3px;height:3px;background:#6aa0e0;"></div>
<div class="a" style="left:417px;top:412px;width:78px;height:23px;border:1px solid #b08ee0"></div>
<div class="a" style="left:416px;top:433px;width:3px;height:3px;background:#b08ee0;"></div>
<div class="a" style="left:493px;top:433px;width:3px;height:3px;background:#b08ee0;"></div>
<div class="a" style="left:418px;top:434px;width:232px;height:1px;background:#f4f4f4;"></div>
<div class="a" style="left:418px;top:435px;width:232px;height:21px;background:#c6dfb4;"></div>
<div class="a" style="left:418px;top:456px;width:77px;height:1px;background:#4d6b45;"></div>
<div class="t" style="left:421.00px;top:439.00px;font-size:15.36px;color:#111;transform:scaleX(0.902);-webkit-text-stroke:0.2px currentColor;">=HLOOKUP(</div>
<div class="t" style="left:502.00px;top:439.00px;font-size:15.36px;color:#5b9bd5;transform:scaleX(0.837);-webkit-text-stroke:0.2px currentColor;">F8</div>
<div class="t" style="left:517.50px;top:439.00px;font-size:15.36px;color:#111;transform:scaleX(1.171);-webkit-text-stroke:0.2px currentColor;">,</div>
<div class="t" style="left:523.00px;top:439.00px;font-size:15.36px;color:#e07f6b;transform:scaleX(0.930);-webkit-text-stroke:0.2px currentColor;">E1:G6</div>
<div class="t" style="left:564.00px;top:439.00px;font-size:15.36px;color:#111;transform:scaleX(1.171);-webkit-text-stroke:0.2px currentColor;">,</div>
<div class="t" style="left:569.50px;top:439.00px;font-size:15.36px;color:#a38ad6;transform:scaleX(0.837);-webkit-text-stroke:0.2px currentColor;">F9</div>
<div class="t" style="left:585.00px;top:439.00px;font-size:15.36px;color:#111;transform:scaleX(0.865);-webkit-text-stroke:0.2px currentColor;">,FALSE)</div>
<div class="a" style="left:418px;top:430px;width:238px;height:37px;border:3px solid #c21d2b;border-top-width:3.5px"></div>
<div class="a" style="left:699px;top:222px;width:15px;height:291px;background:#161513;"></div>
<svg style="left:704px;top:227px;" width="9" height="6" viewBox="0 0 9 6"><path d="M4.5 0 L9 6 H0 Z" fill="#9a9a9a"/></svg>
<div class="a" style="left:704.5px;top:237px;width:7.5px;height:157px;background:#a3a3a3;border-radius:4px"></div>
<svg style="left:704px;top:504px;" width="9" height="6" viewBox="0 0 9 6"><path d="M0 0 H9 L4.5 6 Z" fill="#9a9a9a"/></svg>
<div class="a" style="left:0px;top:513px;width:714px;height:29px;background:#1c1c1b;"></div>
<div class="a" style="left:99px;top:509px;width:53px;height:29px;background:#ffffff;border-radius:0 0 5px 5px"></div>
<div class="a" style="left:0;top:513px;width:99px;height:10px;background:#1c1c1b;border-radius:0 5px 0 0"></div>
<div class="a" style="left:152px;top:513px;width:562px;height:10px;background:#1c1c1b;border-radius:5px 0 0 0"></div>
<div class="a" style="left:94px;top:513px;width:5px;height:5px;background:#ffffff;"></div>
<div class="a" style="left:152px;top:513px;width:5px;height:5px;background:#ffffff;"></div>
<div class="a" style="left:0;top:513px;width:99px;height:10px;background:#1c1c1b;border-radius:0 5px 0 0"></div>
<div class="a" style="left:152px;top:513px;width:547px;height:10px;background:#1c1c1b;border-radius:5px 0 0 0"></div>
<svg style="left:20px;top:522px;" width="6" height="9" viewBox="0 0 6 9"><path d="M5.5 0.5 L1 4.5 L5.5 8.5" fill="none" stroke="#8a8a8a" stroke-width="1.2"/></svg>
<svg style="left:50px;top:522px;" width="6" height="9" viewBox="0 0 6 9"><path d="M0.5 0.5 L5 4.5 L0.5 8.5" fill="none" stroke="#8a8a8a" stroke-width="1.2"/></svg>
<div class="t" style="left:107.00px;top:520.00px;font-size:12.61px;color:#1b1b1b;transform:scaleX(0.938);-webkit-text-stroke:0.3px currentColor;">Sheet1</div>
<div class="a" style="left:107px;top:534px;width:38px;height:2px;background:#1e6b45;"></div>
<div class="a" style="left:154px;top:517px;width:1px;height:19px;background:#5a5a5a;"></div>
<svg style="left:193px;top:520px;" width="12" height="12" viewBox="0 0 12 12"><path d="M6 0.5 V11.5 M0.5 6 H11.5" stroke="#e0e0e0" stroke-width="1.2"/></svg>
<div class="a" style="left:432px;top:523px;width:2.2px;height:2.2px;background:#f0f0f0;border-radius:1px"></div>
<div class="a" style="left:432px;top:526.5px;width:2.2px;height:2.2px;background:#f0f0f0;border-radius:1px"></div>
<div class="a" style="left:432px;top:530px;width:2.2px;height:2.2px;background:#f0f0f0;border-radius:1px"></div>
<svg style="left:453px;top:522.5px;" width="6" height="8.5" viewBox="0 0 6 8.5"><path d="M6 0 V8.5 L0 4.25 Z" fill="#9a9a9a"/></svg>
<div class="a" style="left:464px;top:523px;width:193px;height:7.5px;background:#a3a3a3;border-radius:4px"></div>
<svg style="left:690px;top:522.5px;" width="6" height="8.5" viewBox="0 0 6 8.5"><path d="M0 0 V8.5 L6 4.25 Z" fill="#9a9a9a"/></svg>
<div class="a" style="left:0px;top:541px;width:714px;height:19px;background:#161615;"></div>
<div class="a" style="left:0px;top:541px;width:714px;height:1px;background:#2c2c2b;"></div>
<div class="t" style="left:9.80px;top:547.00px;font-size:10.87px;color:#e8e8e8;transform:scaleX(0.854);">Edit</div>
<svg style="left:52px;top:546px;" width="14" height="12" viewBox="0 0 14 12"><path d="M0.6 0.6 H12.4 V3 H0.6 Z M0.6 3 V11.4 H5" fill="none" stroke="#d8d8d8" stroke-width="1.1"/><path d="M2.5 5.5 H5.5 M2.5 8 H5" stroke="#d8d8d8" stroke-width="1"/><circle cx="9.5" cy="8.5" r="3" fill="none" stroke="#d8d8d8" stroke-width="1.1"/><circle cx="9.5" cy="8.5" r="1.4" fill="#d8d8d8"/></svg>
<svg style="left:80px;top:546px;" width="14" height="13" viewBox="0 0 14 13"><circle cx="6" cy="1.8" r="1.5" fill="none" stroke="#d8d8d8" stroke-width="1"/><path d="M1 3.5 Q6 6 11 3.5 M6 5 V8 L3 11.5 M6 8 L7 9" fill="none" stroke="#d8d8d8" stroke-width="1.1"/><path d="M7.5 10 L9.3 12 L13 7.5" fill="none" stroke="#d8d8d8" stroke-width="1.1"/></svg>
<div class="t" style="left:97.00px;top:548.00px;font-size:10.43px;color:#e8e8e8;transform:scaleX(0.893);">Accessibility: Good to go</div>
<svg style="left:449px;top:546px;" width="12" height="12" viewBox="0 0 12 12"><path d="M0.5 0.5 H11.5 V11.5 H0.5 Z M0.5 4.2 H11.5 M0.5 7.8 H11.5 M4.2 0.5 V11.5 M7.8 0.5 V11.5" fill="none" stroke="#7c7c7c" stroke-width="1"/></svg>
<svg style="left:486px;top:546px;" width="13" height="12" viewBox="0 0 13 12"><path d="M0.5 0.5 H12.5 V11.5 H0.5 Z M2.5 2.5 H10.5 V9.5 H2.5 Z M4.5 4.5 H8.5 M4.5 6.2 H8.5 M4.5 8 H8.5" fill="none" stroke="#7c7c7c" stroke-width="1"/></svg>
<svg style="left:522px;top:546px;" width="13" height="12" viewBox="0 0 13 12"><path d="M0.5 0.5 H12.5 V11.5 H0.5 Z M0.5 6.5 H8 V0.5 M4 0.5 V6.5" fill="none" stroke="#7c7c7c" stroke-width="1"/></svg>
<div class="a" style="left:552px;top:551px;width:7px;height:1px;background:#7c7c7c;"></div>
<div class="a" style="left:563.5px;top:551px;width:90px;height:1.5px;background:#c8c8c8;"></div>
<div class="a" style="left:608px;top:547px;width:1.3px;height:9px;background:#e0e0e0;"></div>
<svg style="left:658px;top:548px;" width="7" height="7" viewBox="0 0 7 7"><path d="M3.5 0 V7 M0 3.5 H7" stroke="#7c7c7c" stroke-width="1"/></svg>
<div class="t" style="left:676.50px;top:548.00px;font-size:10.29px;color:#7c7c7c;transform:scaleX(0.901);">100%</div>
</body></html>
